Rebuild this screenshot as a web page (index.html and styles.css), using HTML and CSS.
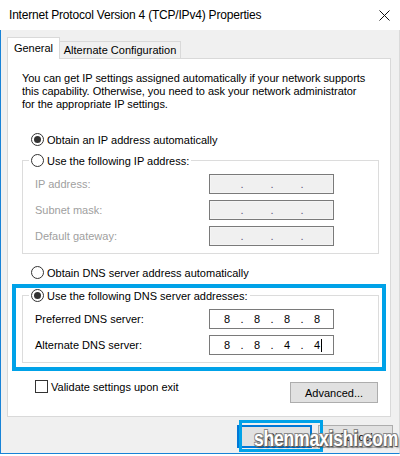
FILE: index.html
```html
<!DOCTYPE html>
<html>
<head>
<meta charset="utf-8">
<title>Internet Protocol Version 4 (TCP/IPv4) Properties</title>
<link rel="stylesheet" href="styles.css">
</head>
<body>
<div class="window">
  <div class="titlebar">
    <span class="title">Internet Protocol Version 4 (TCP/IPv4) Properties</span>
    <svg class="close" width="11" height="11" viewBox="0 0 11 11"><path d="M0.5 0.5L10.5 10.5M10.5 0.5L0.5 10.5" stroke="#111" stroke-width="1" fill="none"/></svg>
  </div>
  <div class="frame">
    <div class="tabs">
      <div class="tab active">General</div>
      <div class="tab alt">Alternate Configuration</div>
    </div>
    <div class="panel">
      <p class="desc">You can get IP settings assigned automatically if your network supports<br>this capability. Otherwise, you need to ask your network administrator<br>for the appropriate IP settings.</p>
      <div class="radio-row"><span class="radio checked"></span>Obtain an IP address automatically</div>
      <fieldset class="group">
        <legend><span class="legend-row"><span class="radio"></span>Use the following IP address:</span></legend>
        <div class="field-row disabled"><span class="lbl">IP address:</span><span class="ipbox off"><span class="oct"></span><span class="dot">.</span><span class="oct"></span><span class="dot">.</span><span class="oct"></span><span class="dot">.</span><span class="oct"></span></span></div>
        <div class="field-row disabled"><span class="lbl">Subnet mask:</span><span class="ipbox off"><span class="oct"></span><span class="dot">.</span><span class="oct"></span><span class="dot">.</span><span class="oct"></span><span class="dot">.</span><span class="oct"></span></span></div>
        <div class="field-row disabled"><span class="lbl">Default gateway:</span><span class="ipbox off"><span class="oct"></span><span class="dot">.</span><span class="oct"></span><span class="dot">.</span><span class="oct"></span><span class="dot">.</span><span class="oct"></span></span></div>
      </fieldset>
      <div class="radio-row dns-auto"><span class="radio"></span>Obtain DNS server address automatically</div>
      <fieldset class="group dns">
        <legend><span class="legend-row"><span class="radio checked"></span>Use the following DNS server addresses:</span></legend>
        <div class="field-row"><span class="lbl">Preferred DNS server:</span><span class="ipbox"><span class="oct">8</span><span class="dot">.</span><span class="oct">8</span><span class="dot">.</span><span class="oct">8</span><span class="dot">.</span><span class="oct">8</span></span></div>
        <div class="field-row"><span class="lbl">Alternate DNS server:</span><span class="ipbox"><span class="oct">8</span><span class="dot">.</span><span class="oct">8</span><span class="dot">.</span><span class="oct">4</span><span class="dot">.</span><span class="oct">4<span class="caret"></span></span></span></div>
      </fieldset>
      <div class="check-row">
        <span class="check-label"><span class="checkbox"></span>Validate settings upon exit</span>
        <button class="btn adv">Advanced...</button>
      </div>
      <div class="highlight dns-hl"></div>
    </div>
    <div class="actions">
      <button class="btn ok">OK</button>
      <button class="btn">Cancel</button>
      <div class="highlight ok-hl"></div>
      <div class="watermark">shenmaxishi.com</div>
    </div>
  </div>
</div>
</body>
</html>
```

FILE: styles.css
```css
* { box-sizing: border-box; }
html, body { margin: 0; padding: 0; }
body {
  width: 400px;
  height: 456px;
  overflow: hidden;
  background: #fff;
  color: #000;
  font-family: "Liberation Sans", Arial, sans-serif;
  font-size: 11px;
}
.window {
  width: 400px;
  height: 456px;
  display: flex;
  flex-direction: column;
  background: #fff;
}
.titlebar {
  height: 30px;
  flex: none;
  display: flex;
  align-items: center;
  justify-content: space-between;
  padding: 0 10px 0 9px;
  font-size: 12px;
  background: #fff;
}
.title { letter-spacing: -0.2px; }
.close { display: block; margin-top: 1px; }
.frame {
  height: 424px;
  flex: none;
  background: #f0f0f0;
  border-left: 1px solid #1883d7;
  border-right: 1px solid #dadada;
  border-bottom: 1px solid #1883d7;
  padding: 7px 0 0 6px;
}
.tabs {
  display: flex;
  align-items: flex-end;
  height: 21px;
}
.tab {
  height: 17px;
  border: 1px solid #d9d9d9;
  border-bottom: none;
  background: #f0f0f0;
  line-height: 16px;
  text-align: center;
}
.tab.active {
  width: 53px;
  height: 22px;
  margin-bottom: -1px;
  background: #fff;
  line-height: 20px;
  position: relative;
  z-index: 1;
}
.tab.alt {
  width: 121px;
  border-left: none;
}
.panel {
  width: 384px;
  background: #fff;
  border: 1px solid #d9d9d9;
  padding: 13px 11px 13px 14px;
  position: relative;
}
.desc {
  margin: 0 0 21px;
  line-height: 13px;
  white-space: nowrap;
  letter-spacing: -0.04px;
}
.radio-row {
  display: flex;
  align-items: center;
  height: 15px;
  padding-left: 9px;
}
.radio-row.dns-auto { margin-top: 11px; }
.radio {
  display: inline-block;
  flex: none;
  width: 13px;
  height: 13px;
  border: 1px solid #333;
  border-radius: 50%;
  margin-right: 3px;
  position: relative;
  background: #fff;
}
.radio.checked::after {
  content: "";
  position: absolute;
  left: 2px;
  top: 2px;
  width: 7px;
  height: 7px;
  border-radius: 50%;
  background: #333;
}
.group {
  width: 357px;
  min-width: 0;
  margin: 6px 0 0;
  padding: 6px 44px 7px 12px;
  border: 1px solid #dcdcdc;
}
.group.dns { margin-top: 8px; }
.group legend {
  margin-left: -6px;
  padding: 0 2px;
  height: 15px;
}
.legend-row {
  display: flex;
  align-items: center;
  height: 15px;
}
.field-row {
  display: flex;
  align-items: center;
  height: 20px;
}
.field-row + .field-row { margin-top: 6px; }
.field-row.disabled .lbl { color: #a0a0a0; }
.lbl { width: 174px; flex: none; }
.ipbox {
  width: 125px;
  height: 20px;
  flex: none;
  display: flex;
  align-items: center;
  padding-left: 6px;
  border: 1px solid #7a7a7a;
  background: #fff;
}
.ipbox.off {
  background: #f0f0f0;
  box-shadow: inset 0 0 0 1px #f4f4f4;
}
.ipbox.off .dot { color: #5a5a7a; }
.oct { width: 22px; text-align: center; }
.dot { width: 8px; text-align: center; }
.caret {
  display: inline-block;
  width: 1px;
  height: 13px;
  margin-left: 1px;
  margin-right: -2px;
  background: #000;
  vertical-align: -3px;
}
.check-row {
  display: flex;
  align-items: flex-start;
  justify-content: space-between;
  margin-top: 17px;
  padding-left: 13px;
}
.check-label {
  display: flex;
  align-items: center;
  height: 13px;
}
.checkbox {
  width: 13px;
  height: 13px;
  border: 1px solid #333;
  margin-right: 3px;
  background: #fff;
}
.btn {
  height: 23px;
  width: 75px;
  padding: 0;
  border: 1px solid #adadad;
  background: #e1e1e1;
  font-family: inherit;
  font-size: 11px;
  color: #000;
}
.btn.adv {
  width: 88px;
  height: 21px;
  margin-top: 2px;
  margin-right: 1px;
}
.btn.ok { border: 2px solid #0078d7; }
.actions {
  display: flex;
  justify-content: flex-end;
  gap: 6px;
  margin-top: 8px;
  padding-right: 6px;
  position: relative;
}
.highlight {
  position: absolute;
  border: 4px solid #00a2e8;
  pointer-events: none;
}
.dns-hl {
  left: 4px;
  top: 225px;
  width: 374px;
  height: 87px;
}
.ok-hl {
  left: 232px;
  top: -5px;
  width: 84px;
  height: 32px;
  border-width: 3px;
}
.watermark {
  position: absolute;
  left: 247px;
  top: 3px;
  font-family: "Liberation Sans", sans-serif;
  font-weight: bold;
  font-size: 22px;
  line-height: 22px;
  letter-spacing: -0.3px;
  color: #fff;
  transform: scaleX(0.8);
  transform-origin: 0 50%;
  text-shadow: 1px 1px 0 #555, -1px -1px 0 #888, 1px -1px 0 #888, -1px 1px 0 #888, 2px 2px 2px rgba(0,0,0,0.35);
  white-space: nowrap;
}
```
